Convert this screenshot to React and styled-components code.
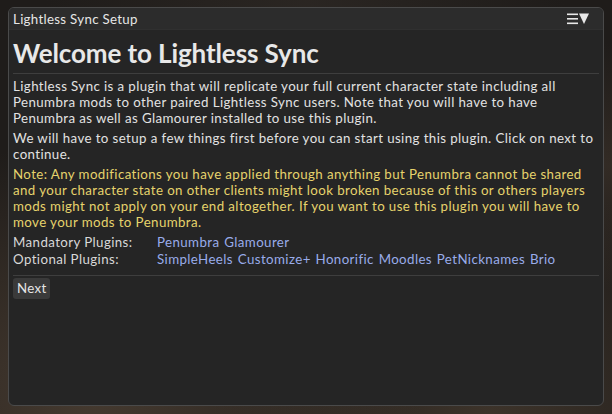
import React from "react";
import styled, { createGlobalStyle } from "styled-components";

const GlobalStyle = createGlobalStyle`
  html, body {
    margin: 0;
    padding: 0;
    width: 612px;
    height: 414px;
    overflow: hidden;
  }
  body {
    font-family: Lato, "Noto Sans", sans-serif;
    background:
      radial-gradient(ellipse at 15% 95%, rgba(95, 78, 62, 0.6), transparent 45%),
      radial-gradient(ellipse at 80% 100%, rgba(85, 70, 55, 0.55), transparent 40%),
      radial-gradient(ellipse at 100% 40%, rgba(70, 58, 48, 0.5), transparent 35%),
      radial-gradient(ellipse at 50% 0%, rgba(45, 40, 36, 0.8), transparent 60%),
      #1f1c1a;
  }
`;

const mandatory = ["Penumbra", "Glamourer"];
const optional = [
  "SimpleHeels",
  "Customize+",
  "Honorific",
  "Moodles",
  "PetNicknames",
  "Brio",
];

const App = () => {
  return (
    <>
      <GlobalStyle />
      <Page>
        <Window>
          <TitleBar>
            <Title>Lightless Sync Setup</Title>
            <MenuIcon width="24" height="12" viewBox="0 0 24 12">
              <rect x="0" y="0.5" width="11" height="1.6" fill="#e8e8e8" />
              <rect x="0" y="5" width="11" height="1.6" fill="#e8e8e8" />
              <rect x="0" y="9.5" width="11" height="1.6" fill="#e8e8e8" />
              <polygon points="12,0.5 22,0.5 17,11" fill="#e8e8e8" />
            </MenuIcon>
          </TitleBar>
          <Body>
            <Heading>Welcome to Lightless Sync</Heading>
            <Separator />
            <Paragraph>
              Lightless Sync is a plugin that will replicate your full current
              character state including all
              <br />
              Penumbra mods to other paired Lightless Sync users. Note that you
              will have to have
              <br />
              Penumbra as well as Glamourer installed to use this plugin.
            </Paragraph>
            <Paragraph>
              We will have to setup a few things first before you can start
              using this plugin. Click on next to
              <br />
              continue.
            </Paragraph>
            <Paragraph $tone="warn">
              Note: Any modifications you have applied through anything but
              Penumbra cannot be shared
              <br />
              and your character state on other clients might look broken
              because of this or others players
              <br />
              mods might not apply on your end altogether. If you want to use
              this plugin you will have to
              <br />
              move your mods to Penumbra.
            </Paragraph>
            <PluginRow>
              <PluginLabel>Mandatory Plugins:</PluginLabel>
              <PluginList>{mandatory.join(" ")}</PluginList>
            </PluginRow>
            <PluginRow>
              <PluginLabel>Optional Plugins:</PluginLabel>
              <PluginList>{optional.join(" ")}</PluginList>
            </PluginRow>
            <Separator $tight />
            <Button>Next</Button>
          </Body>
        </Window>
      </Page>
    </>
  );
};

export default App;

const Page = styled.div`
  width: 612px;
  height: 414px;
  padding: 7px 8px 8px 8px;
  box-sizing: border-box;
`;

const Window = styled.div`
  height: 399px;
  box-sizing: border-box;
  background-color: #252525;
  border: 1px solid #4a4a4a;
  border-radius: 6px;
  overflow: hidden;
  display: flex;
  flex-direction: column;
`;

const TitleBar = styled.div`
  height: 21px;
  background-color: #2c2c2c;
  display: flex;
  align-items: center;
  justify-content: space-between;
  padding: 0 12px 0 4px;
  border-bottom: 1px solid #303030;
`;

const Title = styled.span`
  color: #e6e6e6;
  font-size: 13.3px;
  letter-spacing: 0.3px;
`;

const MenuIcon = styled.svg`
  display: block;
  margin-top: 1px;
`;

const Body = styled.div`
  padding: 5px 4px 0 4px;
  display: flex;
  flex-direction: column;
  align-items: flex-start;
`;

const Heading = styled.h1`
  margin: 0;
  color: #e8e8e8;
  font-size: 26px;
  font-weight: 700;
  line-height: 36px;
  letter-spacing: -0.1px;
`;

const Separator = styled.div`
  align-self: stretch;
  height: 1px;
  background-color: #3e3e3e;
  margin: ${(p) => (p.$tight ? "7px 0 2px" : "2px 0 4px")};
`;

const Paragraph = styled.p`
  margin: 0 0 4px 0;
  color: ${(p) => (p.$tone === "warn" ? "#e6d36c" : "#e2e2e2")};
  font-size: 13.3px;
  line-height: 16px;
  letter-spacing: 0.4px;
  white-space: nowrap;
`;

const PluginRow = styled.div`
  display: flex;
  font-size: 13.3px;
  line-height: 16px;
  letter-spacing: 0.4px;
  margin-bottom: 1px;
  white-space: nowrap;
`;

const PluginLabel = styled.span`
  width: 144px;
  color: #d8d8d8;
`;

const PluginList = styled.span`
  color: #99acea;
  word-spacing: 1px;
`;

const Button = styled.button`
  border: none;
  outline: none;
  background-color: #3a3a3a;
  color: #e6e6e6;
  font-family: inherit;
  font-size: 13.3px;
  letter-spacing: 0.3px;
  padding: 3px 4px;
  border-radius: 3px;
  line-height: 15px;
`;
